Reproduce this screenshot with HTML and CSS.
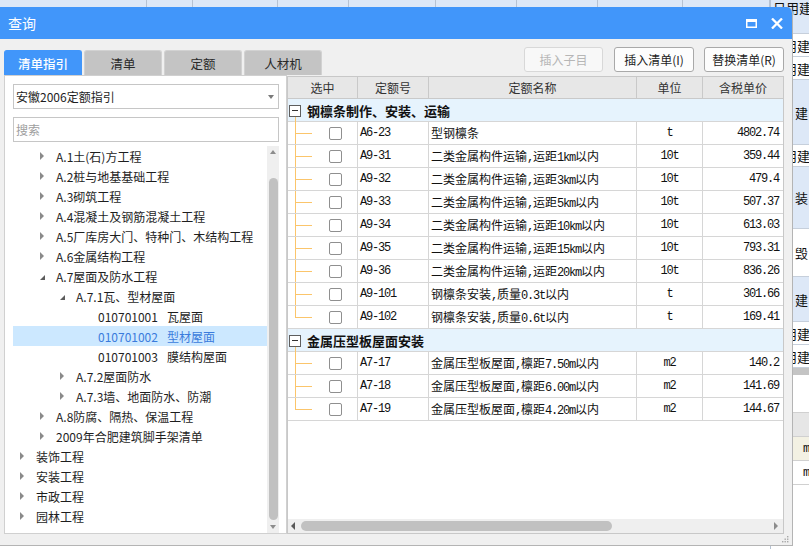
FILE: index.html
```html
<!DOCTYPE html>
<html lang="zh-CN">
<head>
<meta charset="utf-8">
<title>查询</title>
<link rel="stylesheet" href="styles.css">
</head>
<body>
<div class="app">
  <div class="app-left">
    <div class="app-top">
      <div class="tc"></div>
      <div class="tc"></div>
      <div class="tc"></div>
      <div class="tc"></div>
      <div class="tc"></div>
      <div class="tc"></div>
      <div class="tc"></div>
      <div class="tc"></div>
      <div class="tc"></div>
    </div>
    <div class="app-rest"></div>
  </div>
  <div class="app-side">
    <div class="sc s1 b">日用建</div>
    <div class="sc s2">用建</div>
    <div class="sc s3">用建</div>
    <div class="sc s4 b one">建</div>
    <div class="sc s5">用建</div>
    <div class="sc s6 b one">装</div>
    <div class="sc s7 one">毁</div>
    <div class="sc s8 b one">建</div>
    <div class="sc s9">用建</div>
    <div class="sc s10">用建</div>
    <div class="sc s11"></div>
    <div class="sc s12"></div>
    <div class="sc s13 g"></div>
    <div class="sc s14 g m">m</div>
    <div class="sc s15 g m">m</div>
    <div class="sc s16"></div>
  </div>
</div>

<div class="dialog">
  <div class="titlebar">
    <span class="title">查询</span>
    <div class="win-ctrls">
      <svg class="ic-max" width="11" height="9" viewBox="0 0 11 9"><path fill="#fff" fill-rule="evenodd" d="M0 0H11V9H0Z M1.5 3V7.5H9.5V3Z"/></svg>
      <svg class="ic-close" width="12" height="11" viewBox="0 0 12 11"><path d="M1 0.5L11 10.5M11 0.5L1 10.5" stroke="#fff" stroke-width="2.3" fill="none"/></svg>
    </div>
  </div>
  <div class="dlg-body">
    <div class="toolbar">
      <div class="tabs">
        <div class="tab active">清单指引</div>
        <div class="tab">清单</div>
        <div class="tab">定额</div>
        <div class="tab">人材机</div>
      </div>
      <div class="actions">
        <button class="btn" disabled>插入子目</button>
        <button class="btn">插入清单(I)</button>
        <button class="btn">替换清单(R)</button>
      </div>
    </div>
    <div class="panes">
      <div class="left-pane">
        <div class="select"><span>安徽2006定额指引</span><i class="caret"></i></div>
        <div class="search">搜索</div>
        <div class="tree-area">
          <ul class="tree">
            <li class="node l2"><i class="tw c"></i><span>A.1土(石)方工程</span></li>
            <li class="node l2"><i class="tw c"></i><span>A.2桩与地基基础工程</span></li>
            <li class="node l2"><i class="tw c"></i><span>A.3砌筑工程</span></li>
            <li class="node l2"><i class="tw c"></i><span>A.4混凝土及钢筋混凝土工程</span></li>
            <li class="node l2"><i class="tw c"></i><span>A.5厂库房大门、特种门、木结构工程</span></li>
            <li class="node l2"><i class="tw c"></i><span>A.6金属结构工程</span></li>
            <li class="node l2"><i class="tw e"></i><span>A.7屋面及防水工程</span></li>
            <li class="node l3"><i class="tw e"></i><span>A.7.1瓦、型材屋面</span></li>
            <li class="node l4"><i class="tw"></i><span class="code">010701001</span><span>瓦屋面</span></li>
            <li class="node l4 selected"><i class="tw"></i><span class="code">010701002</span><span>型材屋面</span></li>
            <li class="node l4"><i class="tw"></i><span class="code">010701003</span><span>膜结构屋面</span></li>
            <li class="node l3"><i class="tw c"></i><span>A.7.2屋面防水</span></li>
            <li class="node l3"><i class="tw c"></i><span>A.7.3墙、地面防水、防潮</span></li>
            <li class="node l2"><i class="tw c"></i><span>A.8防腐、隔热、保温工程</span></li>
            <li class="node l2"><i class="tw c"></i><span>2009年合肥建筑脚手架清单</span></li>
            <li class="node l1"><i class="tw c"></i><span>装饰工程</span></li>
            <li class="node l1"><i class="tw c"></i><span>安装工程</span></li>
            <li class="node l1"><i class="tw c"></i><span>市政工程</span></li>
            <li class="node l1"><i class="tw c"></i><span>园林工程</span></li>
          </ul>
          <div class="vscroll"><i class="up"></i><div class="vthumb"></div><i class="down"></i></div>
        </div>
      </div>
      <div class="right-pane">
        <div class="grid">
          <div class="row head">
            <div class="cell">选中</div><div class="cell">定额号</div><div class="cell">定额名称</div><div class="cell">单位</div><div class="cell">含税单价</div>
          </div>
          <div class="row group"><i class="minus"></i><span>钢檩条制作、安装、运输</span></div>
          <div class="row"><div class="cell sel"><i class="cb"></i></div><div class="cell code mono">A6-23</div><div class="cell name">型钢檩条</div><div class="cell unit mono">t</div><div class="cell price mono">4802.74</div></div>
          <div class="row"><div class="cell sel"><i class="cb"></i></div><div class="cell code mono">A9-31</div><div class="cell name">二类金属构件运输<span class="m">,</span>运距<span class="m">1km</span>以内</div><div class="cell unit mono">10t</div><div class="cell price mono">359.44</div></div>
          <div class="row"><div class="cell sel"><i class="cb"></i></div><div class="cell code mono">A9-32</div><div class="cell name">二类金属构件运输<span class="m">,</span>运距<span class="m">3km</span>以内</div><div class="cell unit mono">10t</div><div class="cell price mono">479.4</div></div>
          <div class="row"><div class="cell sel"><i class="cb"></i></div><div class="cell code mono">A9-33</div><div class="cell name">二类金属构件运输<span class="m">,</span>运距<span class="m">5km</span>以内</div><div class="cell unit mono">10t</div><div class="cell price mono">507.37</div></div>
          <div class="row"><div class="cell sel"><i class="cb"></i></div><div class="cell code mono">A9-34</div><div class="cell name">二类金属构件运输<span class="m">,</span>运距<span class="m">10km</span>以内</div><div class="cell unit mono">10t</div><div class="cell price mono">613.03</div></div>
          <div class="row"><div class="cell sel"><i class="cb"></i></div><div class="cell code mono">A9-35</div><div class="cell name">二类金属构件运输<span class="m">,</span>运距<span class="m">15km</span>以内</div><div class="cell unit mono">10t</div><div class="cell price mono">793.31</div></div>
          <div class="row"><div class="cell sel"><i class="cb"></i></div><div class="cell code mono">A9-36</div><div class="cell name">二类金属构件运输<span class="m">,</span>运距<span class="m">20km</span>以内</div><div class="cell unit mono">10t</div><div class="cell price mono">836.26</div></div>
          <div class="row"><div class="cell sel"><i class="cb"></i></div><div class="cell code mono">A9-101</div><div class="cell name">钢檩条安装<span class="m">,</span>质量<span class="m">0.3t</span>以内</div><div class="cell unit mono">t</div><div class="cell price mono">301.66</div></div>
          <div class="row"><div class="cell sel last"><i class="cb"></i></div><div class="cell code mono">A9-102</div><div class="cell name">钢檩条安装<span class="m">,</span>质量<span class="m">0.6t</span>以内</div><div class="cell unit mono">t</div><div class="cell price mono">169.41</div></div>
          <div class="row group"><i class="minus"></i><span>金属压型板屋面安装</span></div>
          <div class="row"><div class="cell sel"><i class="cb"></i></div><div class="cell code mono">A7-17</div><div class="cell name">金属压型板屋面<span class="m">,</span>檩距<span class="m">7.50m</span>以内</div><div class="cell unit mono">m2</div><div class="cell price mono">140.2</div></div>
          <div class="row"><div class="cell sel"><i class="cb"></i></div><div class="cell code mono">A7-18</div><div class="cell name">金属压型板屋面<span class="m">,</span>檩距<span class="m">6.00m</span>以内</div><div class="cell unit mono">m2</div><div class="cell price mono">141.69</div></div>
          <div class="row"><div class="cell sel last"><i class="cb"></i></div><div class="cell code mono">A7-19</div><div class="cell name">金属压型板屋面<span class="m">,</span>檩距<span class="m">4.20m</span>以内</div><div class="cell unit mono">m2</div><div class="cell price mono">144.67</div></div>
        </div>
        <div class="hscroll"><i class="left"></i><div class="hthumb"></div><i class="right"></i></div>
      </div>
    </div>
  </div>
  <svg class="grip" width="7" height="7" viewBox="0 0 7 7"><g fill="#a8a8a8"><rect x="5" y="0" width="1.4" height="1.4"/><rect x="2.5" y="2.5" width="1.4" height="1.4"/><rect x="5" y="2.5" width="1.4" height="1.4"/><rect x="0" y="5" width="1.4" height="1.4"/><rect x="2.5" y="5" width="1.4" height="1.4"/><rect x="5" y="5" width="1.4" height="1.4"/></g></svg>
</div>
</body>
</html>
```

FILE: styles.css
```css
* { box-sizing: border-box; margin: 0; padding: 0; }
html, body { width: 809px; height: 549px; }
body {
  overflow: hidden;
  position: relative;
  background: #fff;
  font-family: "Noto Sans CJK SC", "Noto Sans", sans-serif;
  font-size: 12px;
  color: #1e1e1e;
}

/* ---------- background application ---------- */
.app { display: flex; height: 549px; }
.app-left { flex: 1; display: flex; flex-direction: column; }
.app-top {
  height: 7px;
  display: grid;
  grid-template-columns: 147px 46px 85px 71px 87px 81px 81px 85px 87px;
  background: #dde8f7;
  overflow: hidden;
}
.app-top .tc { border-right: 1px solid #b7c3d3; }
.app-rest { flex: 1; }

.app-side {
  width: 39px;
  display: flex;
  flex-direction: column;
  font-size: 13px;
  color: #111;
  border-left: 1px solid #b7c3d3;
}
.sc {
  border-bottom: 1px solid #c6cfdb;
  display: flex;
  align-items: center;
  padding-left: 13px;
  white-space: nowrap;
  overflow: hidden;
  background: #fff;
  flex: none;
}
.sc.b { background: #dde8f7; }
.sc.one { padding-left: 24px; }
.s1 { height: 34px; align-items: flex-start; padding-left: 2px; line-height: 16px; }
.s2, .s3, .s9, .s10 { height: 23px; }
.s4 { height: 65px; }
.s5 { height: 22px; }
.s6 { height: 62px; }
.s7 { height: 48px; }
.s8 { height: 45px; }
.s11 { height: 7px; background: #c4c4c4; border-bottom: none; }
.s12 { height: 38px; border-bottom: 1px solid #d0d0d0; }
.s13 { height: 24px; background: #e6e6e6; }
.s14 { height: 24px; background: #f3f1e3; }
.s15 { height: 24px; }
.sc.g { border-bottom-color: #d0d0d0; }
.sc.m { padding-left: 32px; font-size: 12px; }
.s16 { flex: 1; border-bottom: none; }

/* ---------- dialog window ---------- */
.dialog {
  position: absolute;
  left: 0;
  top: 7px;
  width: 793px;
  height: 539px;
  background: #f0f0f0;
  border-right: 1px solid #b4b4b4;
  border-bottom: 1px solid #b4b4b4;
  border-radius: 0 6px 0 0;
  overflow: hidden;
  display: flex;
  flex-direction: column;
  z-index: 1;
}
.titlebar {
  height: 32px;
  flex: none;
  background: #4196fa;
  display: flex;
  align-items: center;
  padding: 0 9px 0 8px;
}
.title { color: #fff; font-size: 14px; }
.win-ctrls { margin-left: auto; display: flex; align-items: center; gap: 14px; }
.ic-max { display: block; margin-top: 1px; }
.ic-close { display: block; }

.dlg-body {
  flex: 1;
  padding: 8px 8px 0 4px;
  display: flex;
  flex-direction: column;
}
.toolbar { height: 28px; display: flex; justify-content: space-between; align-items: flex-start; }
.tabs { display: flex; gap: 2px; margin-top: 3px; }
.tab {
  width: 78px;
  height: 25px;
  border-radius: 3px 3px 0 0;
  display: flex;
  align-items: center;
  justify-content: center;
  background: #c4c4c4;
  color: #2a2a2a;
  border: 1px solid #d2d2d2;
  border-bottom: none;
  font-size: 12.5px;
}
.tab.active { background: #4196fa; color: #fff; border-color: #4196fa; font-weight: 500; }

.actions { display: flex; gap: 10px; }
.btn {
  height: 25px;
  width: 80px;
  border: 1px solid #a9a9a9;
  border-radius: 3px;
  background: #fdfdfd;
  font-family: inherit;
  font-size: 12px;
  color: #1e1e1e;
}
.btn:first-child { width: 79px; margin-right: 1px; }
.btn:disabled { border-color: #d8d8d8; color: #b6b6b6; background: #f8f8f8; }

.panes { display: flex; align-items: flex-start; }

/* ---------- left pane ---------- */
.left-pane {
  width: 283px;
  height: 459px;
  background: #fff;
  border: 1px solid #d0d0d0;
  padding: 8px 7px 0 8px;
  display: flex;
  flex-direction: column;
}
.select, .search {
  height: 25px;
  border: 1px solid #c6c6c6;
  display: flex;
  align-items: center;
  padding-left: 2px;
  flex: none;
}
.select .caret {
  margin-left: auto;
  margin-right: 4px;
  width: 0;
  height: 0;
  border-top: 4px solid #7a7a7a;
  border-left: 3.5px solid transparent;
  border-right: 3.5px solid transparent;
}
.search { margin-top: 8px; color: #9e9e9e; }
.tree-area { margin-top: 4px; flex: 1; display: flex; }
.tree { list-style: none; flex: 1; }
.node { height: 20px; display: flex; align-items: center; white-space: nowrap; color: #1e1e1e; }
.l1 { padding-left: 0; }
.l2 { padding-left: 20px; }
.l3 { padding-left: 40px; }
.l4 { padding-left: 60px; }
.tw { width: 23px; height: 20px; flex: none; position: relative; }
.tw.c::before {
  content: "";
  position: absolute;
  left: 7px;
  top: 6px;
  border-left: 4px solid #8a8a8a;
  border-top: 4px solid transparent;
  border-bottom: 4px solid transparent;
}
.tw.e::before {
  content: "";
  position: absolute;
  left: 7px;
  top: 9px;
  border-right: 5px solid #5c5c5c;
  border-top: 5px solid transparent;
}
.node .code { width: 71px; flex: none; }
.node.selected { background: #cce8ff; color: #3a7bdc; }

.vscroll {
  width: 12px;
  flex: none;
  background: #efefef;
  display: flex;
  flex-direction: column;
  align-items: center;
  padding: 4px 0 4px;
}
.vscroll .up {
  width: 0; height: 0;
  border-bottom: 4px solid #8c8c8c;
  border-left: 3.5px solid transparent;
  border-right: 3.5px solid transparent;
}
.vthumb { width: 9px; height: 342px; margin-top: 24px; border-radius: 5px; background: #c1c1c1; }
.vscroll .down {
  margin-top: auto;
  width: 0; height: 0;
  border-top: 4px solid #8c8c8c;
  border-left: 3.5px solid transparent;
  border-right: 3.5px solid transparent;
}

/* ---------- right pane ---------- */
.right-pane {
  width: 497px;
  height: 458px;
  margin-top: 1px;
  background: #fff;
  border: 1px solid #c8c8c8;
  display: flex;
  flex-direction: column;
}
.grid { flex: 1; }
.row {
  display: grid;
  grid-template-columns: 70px 71px 208px 66px 80px;
  height: 23px;
}
.cell {
  border-right: 1px solid #d6d6d6;
  border-bottom: 1px solid #d6d6d6;
  display: flex;
  align-items: center;
  overflow: hidden;
  white-space: nowrap;
  position: relative;
}
.cell:last-child { border-right: none; }
.row.head { height: 22px; }
.row.head .cell {
  background: #e7e7e7;
  border-color: #c9c9c9;
  justify-content: center;
  color: #333;
}
.row.group {
  display: flex;
  align-items: center;
  background: #e6f3fd;
  border-bottom: 1px solid #d6d6d6;
  padding-left: 1px;
  font-weight: bold;
  font-size: 13px;
  color: #111;
}
.minus {
  width: 12px;
  height: 12px;
  border: 1px solid #5e5e5e;
  background: #fff;
  position: relative;
  margin-right: 6px;
  margin-top: 1px;
}
.minus::before {
  content: "";
  position: absolute;
  left: 2px;
  top: 4px;
  width: 6px;
  height: 1px;
  background: #333;
}
.minus::after {
  content: "";
  position: absolute;
  left: 5px;
  top: 11px;
  width: 1px;
  height: 6px;
  background: #fbc56b;
}
.sel::before {
  content: "";
  position: absolute;
  left: 7px;
  top: 0;
  bottom: -1px;
  width: 1px;
  background: #fbc56b;
}
.sel.last::before { bottom: auto; height: 12px; }
.sel::after {
  content: "";
  position: absolute;
  left: 7px;
  top: 11px;
  width: 17px;
  height: 1px;
  background: #fbc56b;
}
.cb {
  width: 13px;
  height: 13px;
  margin-left: 41px;
  border: 1px solid #8f8f8f;
  border-radius: 2px;
  background: #fff;
}
.mono, .m {
  font-family: "Liberation Mono", monospace;
  font-size: 12px;
  letter-spacing: -1.2px;
  color: #111;
}
.code { padding-left: 2px; }
.cell.name { display: block; line-height: 22px; padding-left: 2px; color: #111; }
.unit { justify-content: center; }
.price { justify-content: flex-end; padding-right: 4px; }

.hscroll {
  height: 14px;
  flex: none;
  background: #efefef;
  display: flex;
  align-items: center;
  padding: 0 5px 0 3px;
}
.hscroll .left {
  width: 0; height: 0;
  border-right: 4px solid #5a5a5a;
  border-top: 4px solid transparent;
  border-bottom: 4px solid transparent;
}
.hthumb { width: 311px; height: 10px; margin-left: 6px; border-radius: 5px; background: #c1c1c1; }
.hscroll .right {
  margin-left: auto;
  width: 0; height: 0;
  border-left: 4px solid #8c8c8c;
  border-top: 4px solid transparent;
  border-bottom: 4px solid transparent;
}

.grip { position: absolute; right: 3px; bottom: 2px; }
```
